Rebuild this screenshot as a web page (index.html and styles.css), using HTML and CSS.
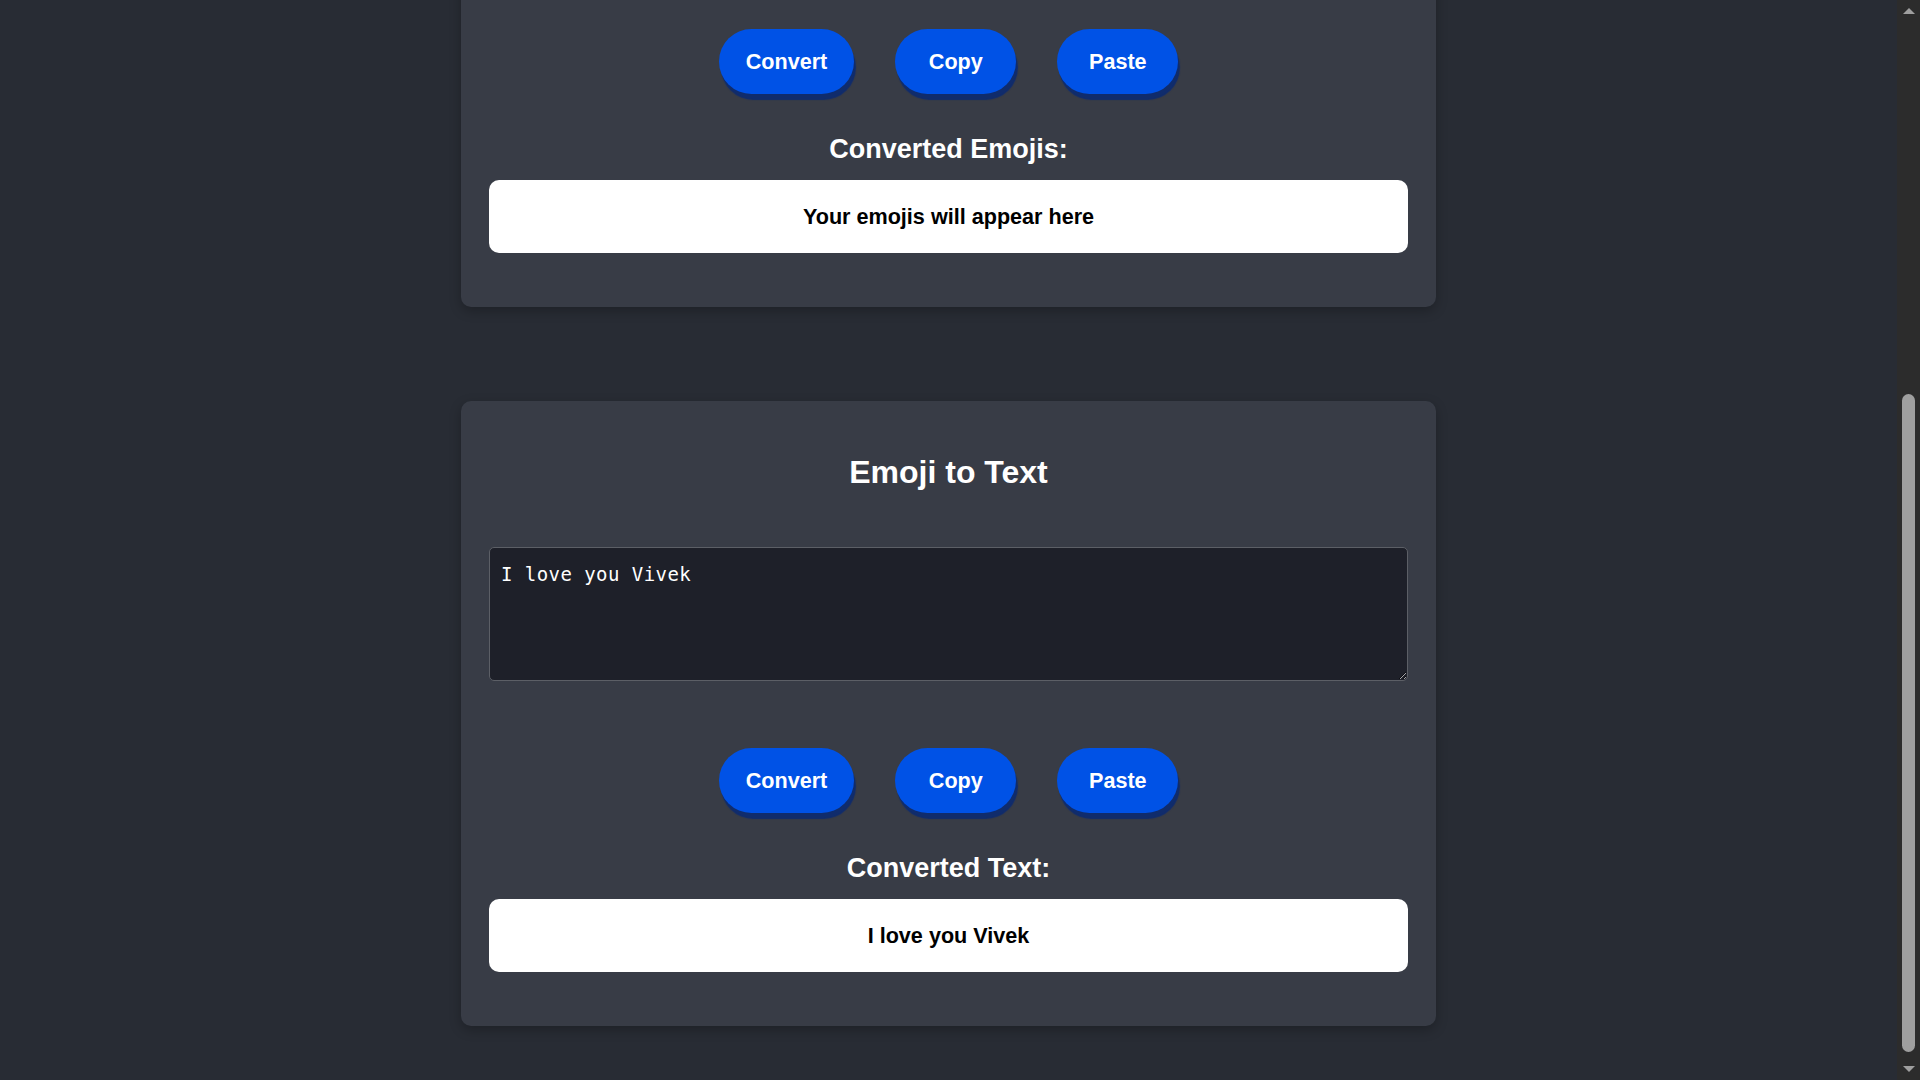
FILE: index.html
```html
<!DOCTYPE html>
<html lang="en">
<head>
<meta charset="UTF-8">
<title>Emoji Converter</title>
<link rel="stylesheet" href="styles.css">
</head>
<body>
<main class="page">
  <header class="page-header">
    <h1 class="page-title">Emoji Converter</h1>
    <p class="page-sub">Turn your words into emojis and back again</p>
  </header>

  <section class="card">
    <h2 class="card-title">Text to Emoji</h2>
    <textarea class="input" placeholder="Type your text here...">I love you Vivek</textarea>
    <div class="actions">
      <button class="btn">Convert</button>
      <button class="btn">Copy</button>
      <button class="btn">Paste</button>
    </div>
    <h3 class="result-title">Converted Emojis:</h3>
    <div class="result">Your emojis will appear here</div>
  </section>

  <section class="card">
    <h2 class="card-title">Emoji to Text</h2>
    <textarea class="input" placeholder="Paste your emojis here...">I love you Vivek</textarea>
    <div class="actions">
      <button class="btn">Convert</button>
      <button class="btn">Copy</button>
      <button class="btn">Paste</button>
    </div>
    <h3 class="result-title">Converted Text:</h3>
    <div class="result">I love you Vivek</div>
  </section>
</main>

<div class="scrollbar" aria-hidden="true">
  <div class="sb-btn"><span class="sb-arrow sb-arrow-up"></span></div>
  <div class="sb-track"><div class="sb-thumb"></div></div>
  <div class="sb-btn"><span class="sb-arrow sb-arrow-down"></span></div>
</div>
<script src="script.js"></script>
</body>
</html>
```
FILE: styles.css
```css
html {
  background: #282c34;
  scrollbar-width: none;
}

html::-webkit-scrollbar {
  display: none;
}

body {
  margin: 0;
  background: #282c34;
  font-family: "Liberation Sans", Arial, sans-serif;
  color: #ffffff;
}

.page {
  display: flex;
  flex-direction: column;
  align-items: center;
  gap: 94px;
  padding: 0 23px 54px 0;
}

.page-header {
  display: flex;
  flex-direction: column;
  align-items: center;
  gap: 12px;
  padding-top: 100px;
  margin-bottom: -18px;
}

.page-title {
  margin: 0;
  font-size: 48px;
  line-height: 56px;
}

.page-sub {
  margin: 0;
  font-size: 18px;
  line-height: 24px;
  color: #b9bdc6;
}

.card {
  box-sizing: border-box;
  width: 975px;
  padding: 28px;
  background: #383c46;
  border-radius: 10px;
  box-shadow: 0 4px 12px rgba(0, 0, 0, 0.25);
  display: flex;
  flex-direction: column;
}

.card-title {
  margin: 25px 0 56px;
  font-size: 32px;
  line-height: 37px;
  font-weight: bold;
  text-align: center;
}

.input {
  box-sizing: border-box;
  display: block;
  width: 100%;
  height: 134px;
  margin: 0;
  padding: 15px 11px;
  background: #1e2029;
  color: #ffffff;
  border: 1px solid #5c5f66;
  border-radius: 5px;
  font-family: "DejaVu Sans Mono", "Liberation Mono", monospace;
  font-size: 19px;
  letter-spacing: 0.45px;
  line-height: 22px;
  outline: none;
}

.actions {
  display: flex;
  justify-content: center;
  gap: 41px;
  margin-top: 67px;
}

.btn {
  box-sizing: border-box;
  min-width: 121px;
  padding: 20px 27px;
  border: none;
  border-radius: 40px;
  background: #0052e6;
  color: #ffffff;
  font-family: "Liberation Sans", Arial, sans-serif;
  font-size: 21.6px;
  line-height: 25px;
  font-weight: bold;
  box-shadow: 2px 6px 1px #102c6c;
  cursor: pointer;
}

.result-title {
  margin: 40px 0 15px;
  font-size: 27px;
  line-height: 31px;
  font-weight: bold;
  text-align: center;
}

.result {
  margin-bottom: 26px;
  padding: 24px;
  background: #ffffff;
  color: #000000;
  border-radius: 10px;
  font-size: 21.6px;
  line-height: 25px;
  font-weight: bold;
  text-align: center;
}

/* window scrollbar drawn over the right edge */
.scrollbar {
  position: fixed;
  top: 0;
  right: 0;
  width: 23px;
  height: 100vh;
  background: #2c2c2c;
  display: flex;
  flex-direction: column;
}

.sb-btn {
  height: 26px;
  flex: none;
  display: flex;
  justify-content: center;
}

.sb-btn:first-child {
  align-items: flex-start;
  padding-top: 8px;
  box-sizing: border-box;
}

.sb-btn:last-child {
  align-items: flex-end;
  padding-bottom: 8px;
  box-sizing: border-box;
}

.sb-arrow {
  width: 0;
  height: 0;
  border-left: 6px solid transparent;
  border-right: 6px solid transparent;
}

.sb-arrow-up {
  border-bottom: 6px solid #9f9f9f;
}

.sb-arrow-down {
  border-top: 6px solid #9f9f9f;
}

.sb-track {
  flex: 1;
  display: flex;
  flex-direction: column;
  justify-content: flex-end;
  align-items: center;
  padding-bottom: 2px;
}

.sb-thumb {
  width: 13px;
  height: 658px;
  border-radius: 7px;
  background: #9f9f9f;
}
```
FILE: script.js
```js
window.addEventListener('load', function () {
  window.scrollTo(0, document.documentElement.scrollHeight);
});
window.scrollTo(0, document.documentElement.scrollHeight);
```
